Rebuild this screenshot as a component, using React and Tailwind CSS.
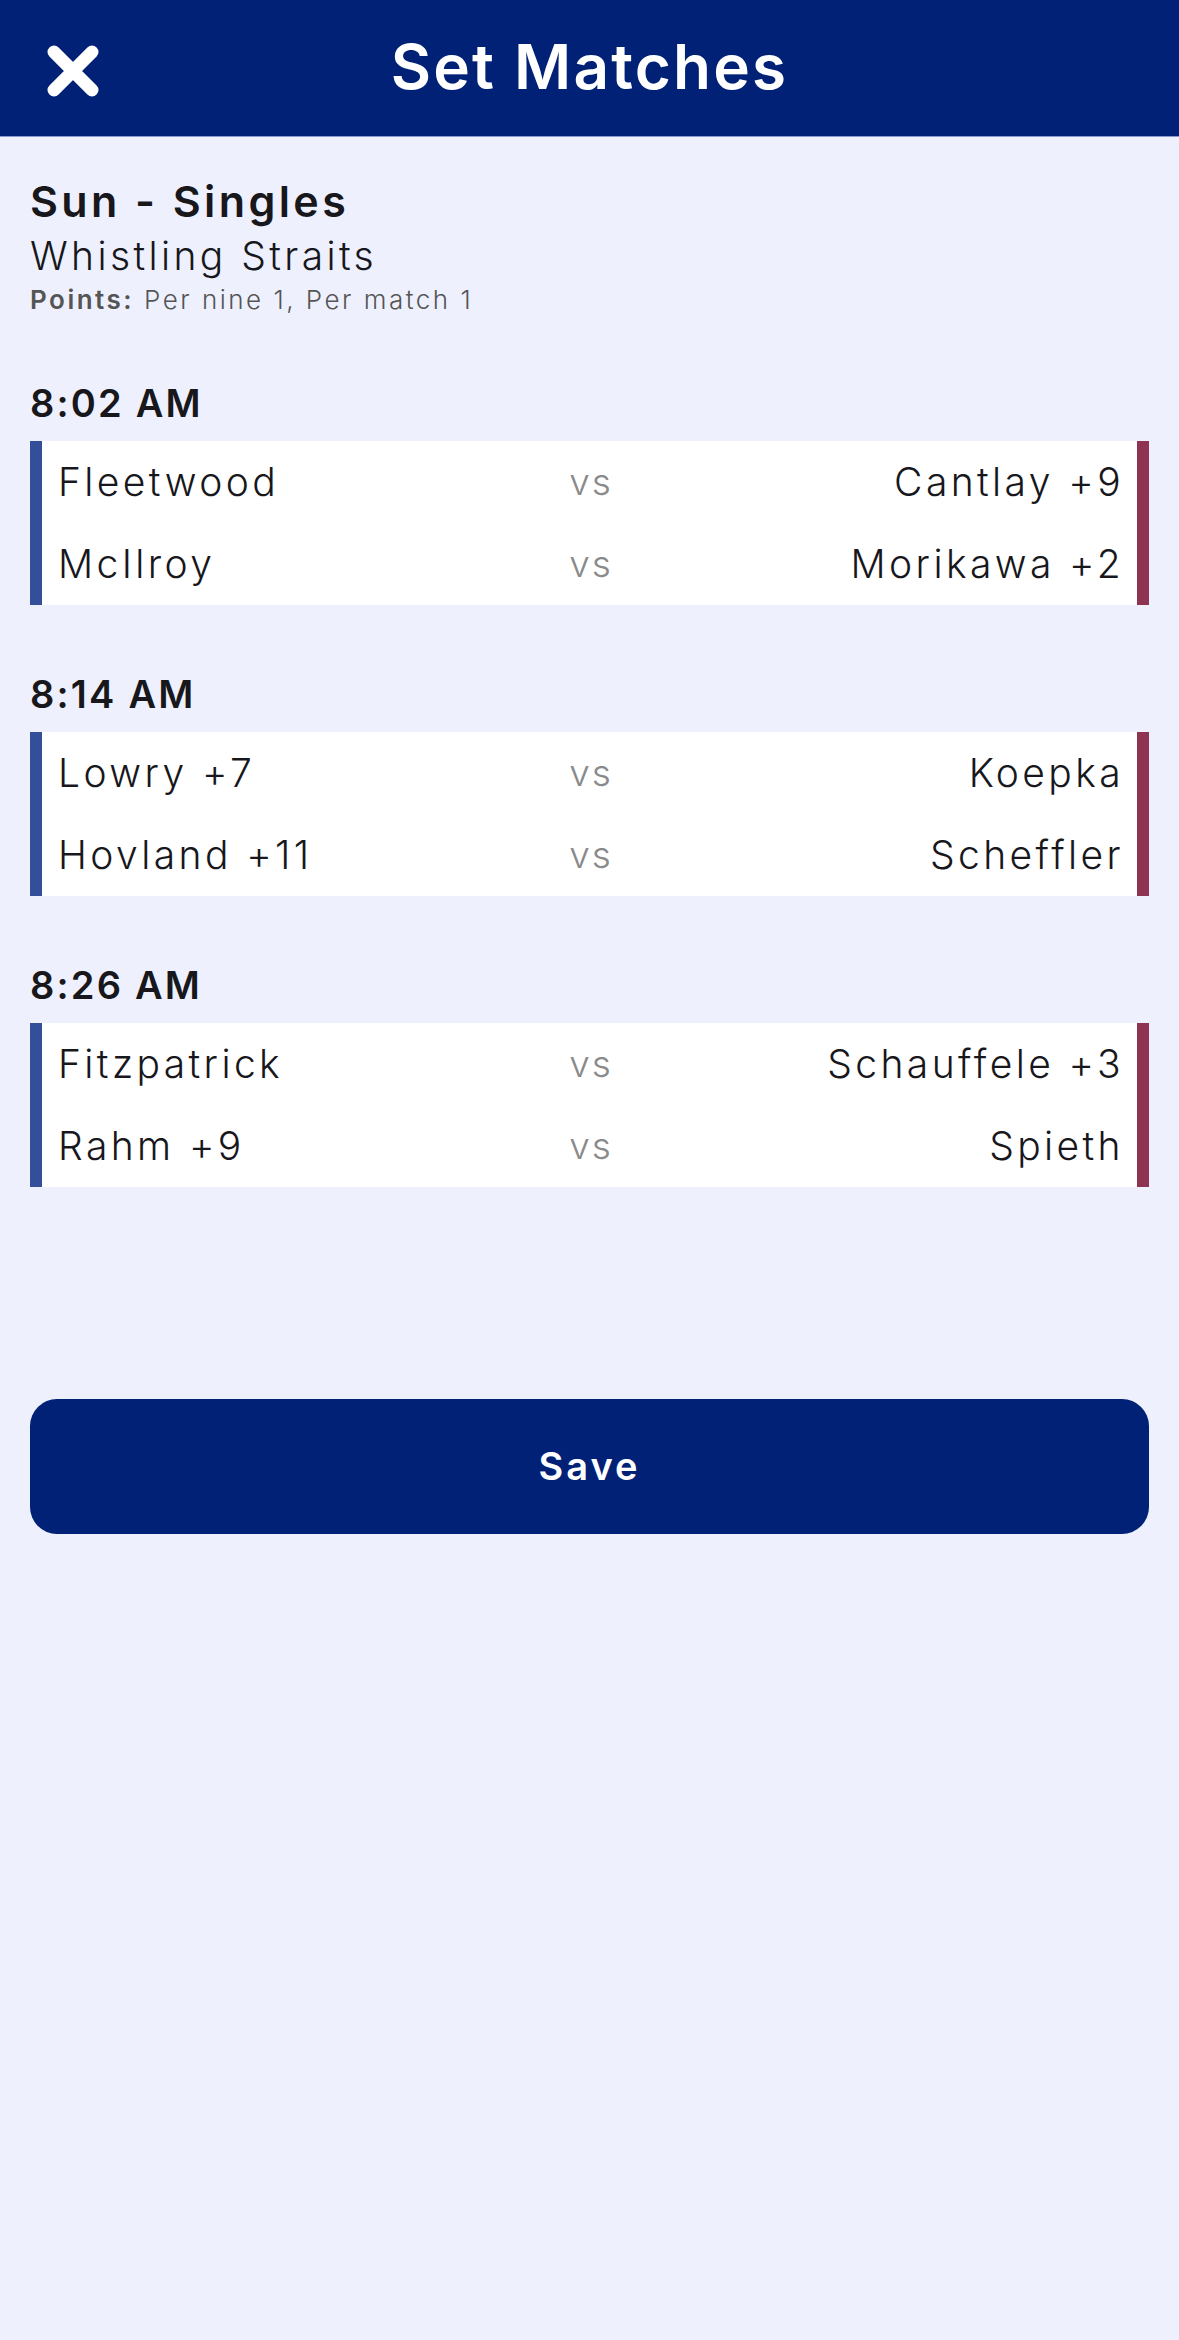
import { useState } from "react";

const font = { fontFamily: "Inter, 'Noto Sans', sans-serif" };

const teeTimes = [
	{
		time: "8:02 AM",
		matches: [
			["Fleetwood", "Cantlay +9"],
			["McIlroy", "Morikawa +2"],
		],
	},
	{
		time: "8:14 AM",
		matches: [
			["Lowry +7", "Koepka"],
			["Hovland +11", "Scheffler"],
		],
	},
	{
		time: "8:26 AM",
		matches: [
			["Fitzpatrick", "Schauffele +3"],
			["Rahm +9", "Spieth"],
		],
	},
];

function CloseIcon() {
	return (
		<svg width="54" height="54" viewBox="0 0 54 54" fill="none">
			<path
				d="M8 8 L46 46 M46 8 L8 46"
				stroke="white"
				strokeWidth="13"
				strokeLinecap="round"
			/>
		</svg>
	);
}

function MatchGroup({ time, matches, first }) {
	return (
		<div className={first ? "mt-[63px]" : "mt-[66px]"}>
			<div className="text-[38px] font-semibold leading-[46px] text-[#17171c] tracking-[2.2px]">
				{time}
			</div>
			<div className="mt-[15px] flex bg-white">
				<div className="w-[12px] bg-[#344f9a]" />
				<div className="flex-1">
					{matches.map(([left, right], i) => (
						<div
							key={i}
							className="h-[82px] grid grid-cols-[1fr_auto_1fr] items-center pl-[16px] pr-[13px] text-[39px] text-[#17171c] font-light tracking-[3.4px]"
						>
							<span className="whitespace-nowrap">{left}</span>
							<span className="text-[#8a8a8a] text-[37px] tracking-[2px]">vs</span>
							<span className="text-right whitespace-nowrap">{right}</span>
						</div>
					))}
				</div>
				<div className="w-[12px] bg-[#8e3352]" />
			</div>
		</div>
	);
}

function App() {
	const [saved, setSaved] = useState(false);

	return (
		<div className="min-h-[2340px] bg-[#eef1fd]" style={font}>
			<header className="h-[137px] bg-[#012177] flex items-center relative border-b border-[#8a9ad0]">
				<button className="absolute left-[46px] top-[44px]" aria-label="Close">
					<CloseIcon />
				</button>
				<h1 className="flex-1 text-center text-white text-[62px] font-semibold tracking-[2.2px] pb-[4px]">
					Set Matches
				</h1>
			</header>

			<main className="px-[30px]">
				<div className="pt-[38px]">
					<div className="text-[43px] font-semibold leading-[52px] text-[#17171c] tracking-[3.4px]">
						Sun - Singles
					</div>
					<div className="mt-[4px] text-[39px] font-light leading-[50px] text-[#17171c] tracking-[3.4px]">
						Whistling Straits
					</div>
					<div className="mt-[2px] text-[26px] leading-[34px] text-[#555] font-light tracking-[2.5px]">
						<span className="font-semibold">Points:</span> Per nine 1, Per match 1
					</div>
				</div>

				{teeTimes.map((t, i) => (
					<MatchGroup key={t.time} time={t.time} matches={t.matches} first={i === 0} />
				))}

				<button
					onClick={() => setSaved(true)}
					className="mt-[212px] w-full h-[135px] rounded-[27px] bg-[#012177] text-white text-[38px] font-semibold tracking-[3px]"
				>
					{saved ? "Save" : "Save"}
				</button>
			</main>
		</div>
	);
}

export default App;
